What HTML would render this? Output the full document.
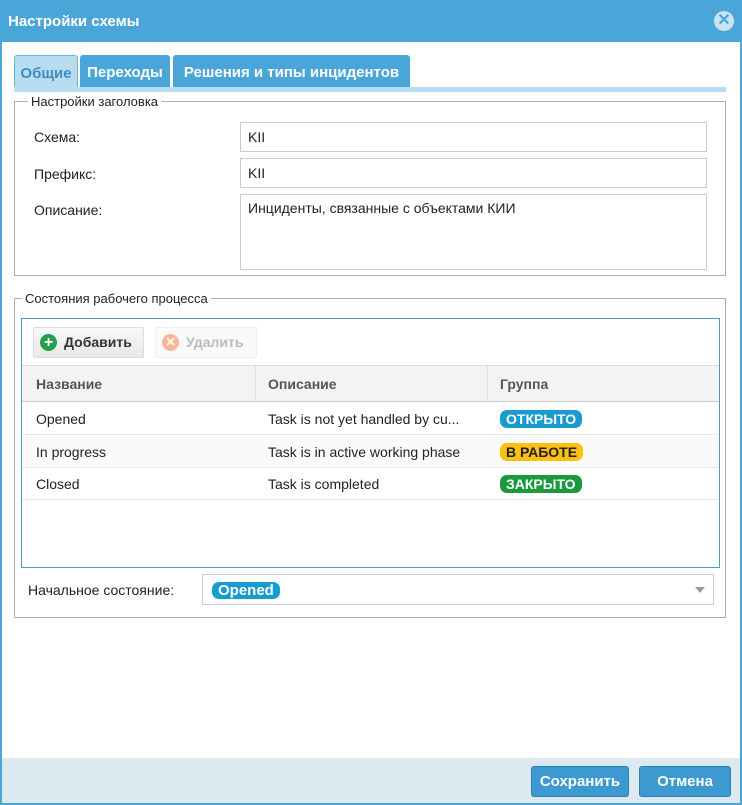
<html><head><style>
body{margin:0;width:742px;height:805px;overflow:hidden;font-family:"Liberation Sans",sans-serif;font-size:14px;color:#222;}
.win{position:absolute;left:0;top:0;width:738px;height:801px;border:2px solid #4aa6d9;background:#fff;}
.title{position:absolute;left:0;top:0;width:738px;height:40px;background:#4aa6d9;color:#fff;font-weight:bold;font-size:15px;line-height:40px;padding-left:6px;box-sizing:border-box;}
.close{position:absolute;right:6px;top:9px;width:20px;height:20px;border-radius:50%;background:#c9e3f3;color:#4aa6d9;font-size:16px;line-height:20px;text-align:center;font-weight:bold}
.a{position:absolute;box-sizing:border-box}
.tab{top:53px;height:34px;background:#4aa6d9;color:#fff;font-weight:bold;font-size:15px;line-height:36px;text-align:center;border-radius:3px 3px 0 0}
.fs{border:1px solid #b0b0b0}
.lg{background:#fff;padding:0 3px;font-size:13px;color:#222}
.inp{border:1px solid #ccc;background:#fff;padding:0 7px;line-height:28px;font-size:14px}
.lbl{font-size:14px}
.btn{border:1px solid #ddd;border-radius:2px;background:linear-gradient(#f8f8f8,#e8e8e8);font-weight:bold;font-size:14px;line-height:28px;}
.pill{position:absolute;top:7px;color:#fff;font-weight:bold;font-size:14px;border-radius:7px;padding:0 6px;line-height:18px;font-style:normal}
.row{left:0;width:696px;height:32px;line-height:32px;border-bottom:1px solid #e8e8e8}
.row span{position:absolute}
.fb{background:#3d9ad1;border:1px solid #2f7fae;border-radius:3px;color:#fff;font-weight:bold;font-size:15px;line-height:29px;text-align:center}
</style></head><body>
<div class="win">
<div class="title">Настройки схемы<div class="close">✕</div></div>
<div class="a tab" style="left:12px;width:64px;background:#b8dcf0;color:#3d8fc2;border:1px solid #6fb4dc;border-bottom:none">Общие</div>
<div class="a tab" style="left:78px;width:90px">Переходы</div>
<div class="a tab" style="left:171px;width:237px">Решения и типы инцидентов</div>
<div class="a" style="left:12px;top:85px;width:712px;height:5px;background:#b8dcf0"></div>

<div class="a fs" style="left:12px;top:99px;width:712px;height:175px"></div>
<div class="a lg" style="left:26px;top:92px">Настройки заголовка</div>
<div class="a lbl" style="left:32px;top:127px">Схема:</div>
<div class="a lbl" style="left:32px;top:164px">Префикс:</div>
<div class="a lbl" style="left:32px;top:200px">Описание:</div>
<div class="a inp" style="left:238px;top:120px;width:467px;height:30px">KII</div>
<div class="a inp" style="left:238px;top:156px;width:467px;height:30px">KII</div>
<div class="a inp" style="left:238px;top:192px;width:467px;height:76px;line-height:26px">Инциденты, связанные с объектами КИИ</div>

<div class="a fs" style="left:12px;top:296px;width:712px;height:320px"></div>
<div class="a lg" style="left:20px;top:289px">Состояния рабочего процесса</div>
<div class="a" style="left:19px;top:316px;width:699px;height:250px;border:1px solid #4a9cc7">
 <div class="a btn" style="left:11px;top:8px;width:111px;height:31px;color:#333"><span style="position:absolute;left:6px;top:6px;width:17px;height:17px;border-radius:50%;background:#22a04b;color:#fff;text-align:center;line-height:17px;font-size:16px">+</span><span style="position:absolute;left:30px">Добавить</span></div>
 <div class="a btn" style="left:133px;top:8px;width:102px;height:31px;color:#bbb;background:#fafafa;border-color:#eee"><span style="position:absolute;left:6px;top:6px;width:17px;height:17px;border-radius:50%;background:#f8b89a;color:#fff;text-align:center;line-height:17px;font-size:12px">✕</span><span style="position:absolute;left:30px">Удалить</span></div>
 <div class="a" style="left:0;top:46px;width:697px;height:37px;background:#f3f3f3;border-top:1px solid #ddd;border-bottom:1px solid #ccc;font-weight:bold;color:#555;line-height:36px">
  <span style="position:absolute;left:14px">Название</span>
  <span style="position:absolute;left:233px;top:0;height:36px;border-left:1px solid #ddd;padding-left:12px">Описание</span>
  <span style="position:absolute;left:465px;top:0;height:36px;border-left:1px solid #ddd;padding-left:12px">Группа</span>
 </div>
 <div class="a row" style="top:84px"><span style="left:14px">Opened</span><span style="left:246px">Task is not yet handled by cu...</span><i class="pill" style="left:478px;background:#179bd0">ОТКРЫТО</i></div>
 <div class="a row" style="top:117px;background:#fafafa"><span style="left:14px">In progress</span><span style="left:246px">Task is in active working phase</span><i class="pill" style="left:478px;background:#fcc010;color:#222">В РАБОТЕ</i></div>
 <div class="a row" style="top:149px"><span style="left:14px">Closed</span><span style="left:246px">Task is completed</span><i class="pill" style="left:478px;background:#1a9a3c">ЗАКРЫТО</i></div>
</div>
<div class="a lbl" style="left:26px;top:580px">Начальное состояние:</div>
<div class="a" style="left:200px;top:572px;width:512px;height:31px;border:1px solid #ccc"><i class="pill" style="left:9px;top:7px;background:#179bd0;font-size:15px;line-height:17px">Opened</i><span style="position:absolute;right:8px;top:12px;border:5px solid transparent;border-top:6px solid #999"></span></div>

<div class="a" style="left:0;top:756px;width:738px;height:45px;background:#dde9f1"></div>
<div class="a fb" style="left:529px;top:764px;width:98px;height:31px">Сохранить</div>
<div class="a fb" style="left:637px;top:764px;width:92px;height:31px">Отмена</div>
</div>
</body></html>
